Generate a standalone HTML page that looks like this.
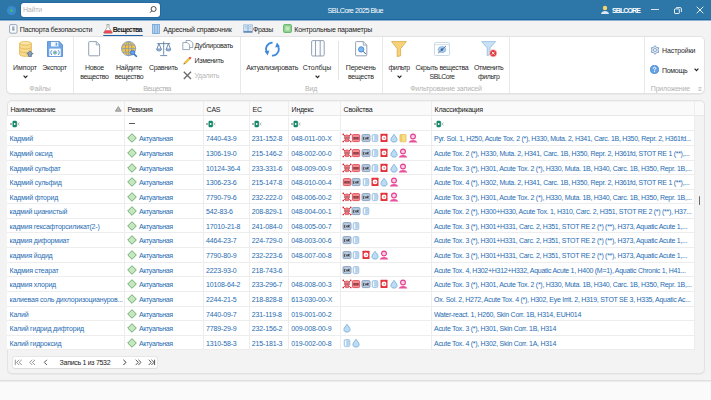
<!DOCTYPE html>
<html><head><meta charset="utf-8">
<style>
*{box-sizing:border-box;margin:0;padding:0}
html,body{width:711px;height:400px;overflow:hidden;background:#f3f3f3;font-family:"Liberation Sans",sans-serif;color:#222}
.a{position:absolute;white-space:nowrap}
svg{display:block}
.t{font-size:7px;line-height:9px}
.tab{color:#222;top:24.5px}
.rb{color:#2a2a2a}
.gl{color:#b2b2b2}
.hd{color:#222}
.c{color:#276cb2}
.ov{overflow:hidden}
</style></head><body>

<div class="a" style="left:0;top:0;width:711px;height:19px;background:#2c76a8"></div>
<div class="a" style="left:0;top:19px;width:711px;height:1px;background:#1a62a2"></div><div class="a" style="left:0;top:20px;width:711px;height:1px;background:#8fb3d3"></div>
<svg class="a" style="left:6px;top:5px" width="11" height="11" viewBox="0 0 11 11"><circle cx="5.5" cy="5.5" r="4.6" fill="#3b8ad0"/><circle cx="5.5" cy="5.5" r="1.2" fill="#38d23a"/></svg>
<div class="a" style="left:20px;top:2px;width:141px;height:16px;background:#2468a4;border-radius:4px"></div><div class="a" style="left:21px;top:3px;width:139px;height:14px;background:#fff;border-radius:3px"></div>
<div class="a t" style="left:23px;top:4.8px;color:#b4b4b4;letter-spacing:-.2px">Найти</div>
<svg class="a" style="left:149px;top:5px" width="9" height="9" viewBox="0 0 9 9"><circle cx="4.6" cy="4" r="2.5" fill="none" stroke="#3a3a3a" stroke-width=".9"/><line x1="2.8" y1="5.8" x2="1" y2="7.7" stroke="#3a3a3a" stroke-width="1"/></svg>
<div class="a t x" style="left:327.5px;top:5.5px;letter-spacing:-0.47px;color:#fff;font-size:7.2px;">SBLCore 2025 Blue</div>
<svg class="a" style="left:600px;top:5px" width="10" height="10" viewBox="0 0 10 10"><circle cx="5" cy="3" r="2.2" fill="#f6d36a"/><path d="M1 9 C1.5 6.8 3 6 5 6 C7 6 8.5 6.8 9 9Z" fill="#dbe8f4"/></svg>
<div class="a t x" style="left:612px;top:5.5px;letter-spacing:-0.9px;color:#fff;font-weight:bold;">SBLCORE</div>
<div class="a" style="left:651.3px;top:9.2px;width:7.4px;height:.9px;background:#d8e4ef"></div>
<svg class="a" style="left:673.5px;top:7px" width="8" height="7" viewBox="0 0 8 7"><rect x=".5" y="1.9" width="4.8" height="4.6" rx=".6" fill="none" stroke="#fff" stroke-width=".9"/><path d="M2.2 .6 H6.2 Q7.4 .6 7.4 1.8 V5" fill="none" stroke="#fff" stroke-width=".9"/></svg>
<svg class="a" style="left:696px;top:6px" width="8" height="8" viewBox="0 0 8 8"><path d="M.7 .7 L7.3 7.3 M7.3 .7 L.7 7.3" stroke="#fff" stroke-width=".9"/></svg>
<div class="a t tab" style="left:19.7px;top:24.5px;letter-spacing:-0.215px;">Паспорта безопасности</div>
<div class="a t tab" style="left:112.7px;top:24.5px;letter-spacing:-0.62px;font-weight:bold;">Вещества</div>
<div class="a t tab" style="left:163.3px;top:24.5px;letter-spacing:-0.178px;">Адресный справочник</div>
<div class="a t tab" style="left:253px;top:24.5px;letter-spacing:-0.225px;">Фразы</div>
<div class="a t tab" style="left:294.3px;top:24.5px;letter-spacing:-0.165px;">Контрольные параметры</div>
<svg class="a" style="left:9px;top:23.8px" width="9" height="10" viewBox="0 0 9 10"><rect x=".6" y=".6" width="7.4" height="8.6" rx="1.2" fill="#fbfcfd" stroke="#8a9db2" stroke-width=".9"/><rect x="3.1" y="2.4" width="2.4" height="3.6" fill="#9fb0c2"/><path d="M3.1 6.2 H5.5" stroke="#5f7890" stroke-width=".6"/></svg>
<svg class="a" style="left:102.5px;top:24px" width="10" height="10" viewBox="0 0 10 10"><path d="M3.6 .6 H6.4 M4 .6 V3.6 L.7 8.6 Q.5 9.2 1.2 9.2 H8.8 Q9.5 9.2 9.3 8.6 L6 3.6 V.6" fill="#fff" stroke="#8a8a8a" stroke-width=".7"/><path d="M2.3 6.2 H7.7 L9.2 8.6 Q9.4 9.2 8.8 9.2 H1.2 Q.6 9.2 .8 8.6Z" fill="#e8484e"/></svg>
<div class="a" style="left:103px;top:35px;width:40px;height:2px;background:#1e62a8;border-radius:1px"></div>
<svg class="a" style="left:152px;top:24px" width="8" height="10" viewBox="0 0 8 10"><rect x=".5" y=".5" width="7" height="9" fill="#b5d3ee" stroke="#6ea4d6" stroke-width=".8"/><path d="M2.7 .5 V9.5 M5.3 .5 V9.5" stroke="#6ea4d6" stroke-width=".8"/></svg>
<svg class="a" style="left:243px;top:24px" width="10" height="9" viewBox="0 0 10 9"><path d="M.6 .8 H4.7 V7.4 H.6Z M5.3 .8 H9.4 V7.4 H5.3Z" fill="#d3e5f5" stroke="#8fb2d6" stroke-width=".7"/><path d="M2 2.5 H3.6 M2 4 H3.6 M6.4 2.5 H8 M6.4 4 H8" stroke="#7ea6d0" stroke-width=".5"/><path d="M.4 8 H9.6" stroke="#2d5e9e" stroke-width="1.1"/></svg>
<svg class="a" style="left:283px;top:24.3px" width="9" height="9" viewBox="0 0 9 9"><rect x=".5" y=".5" width="8" height="8" rx="1.2" fill="#8fd08e" stroke="#56ae5c" stroke-width=".8"/><rect x="2.5" y="2.5" width="4" height="4" rx=".5" fill="#c4e8c2"/></svg>
<div class="a" style="left:6px;top:36px;width:699px;height:58px;background:#fff;border:1px solid #e2e2e2;border-radius:5px;box-shadow:0 1px 0 #e9e9e9"></div>
<div class="a" style="left:73px;top:37px;width:1px;height:56px;background:#e8e8e8"></div>
<div class="a" style="left:240px;top:37px;width:1px;height:56px;background:#e8e8e8"></div>
<div class="a" style="left:382px;top:37px;width:1px;height:56px;background:#e8e8e8"></div>
<div class="a" style="left:509px;top:37px;width:1px;height:56px;background:#e8e8e8"></div>
<div class="a" style="left:644px;top:37px;width:1px;height:56px;background:#e8e8e8"></div>
<div class="a" style="left:338px;top:40.5px;width:1px;height:39px;background:#e4e4e4"></div>
<div class="a t gl" style="left:-10px;width:100px;text-align:center;top:84.2px;letter-spacing:-0.15px;">Файлы</div>
<div class="a t gl" style="left:107px;width:100px;text-align:center;top:84.2px;letter-spacing:-0.62px;">Вещества</div>
<div class="a t gl" style="left:261px;width:100px;text-align:center;top:84.2px;letter-spacing:-0.15px;">Вид</div>
<div class="a t gl" style="left:396px;width:100px;text-align:center;top:84.2px;letter-spacing:-0.147px;">Фильтрование записей</div>
<div class="a t gl" style="left:620.4px;width:100px;text-align:center;top:84.2px;letter-spacing:-0.189px;">Приложение</div>
<div class="a t rb" style="left:-25px;width:100px;text-align:center;top:63px;letter-spacing:-0.1px;">Импорт</div>
<div class="a t rb" style="left:4.5px;width:100px;text-align:center;top:63px;letter-spacing:-0.267px;">Экспорт</div>
<div class="a t rb" style="left:44.400000000000006px;width:100px;text-align:center;top:63px;letter-spacing:-0.3px;">Новое</div>
<div class="a t rb" style="left:44.400000000000006px;width:100px;text-align:center;top:71.8px;letter-spacing:-0.357px;">вещество</div>
<div class="a t rb" style="left:79px;width:100px;text-align:center;top:63px;letter-spacing:-0.3px;">Найдите</div>
<div class="a t rb" style="left:79px;width:100px;text-align:center;top:71.8px;letter-spacing:-0.357px;">вещество</div>
<div class="a t rb" style="left:113.30000000000001px;width:100px;text-align:center;top:63px;letter-spacing:-0.3px;">Сравнить</div>
<div class="a t rb" style="left:222.2px;width:100px;text-align:center;top:63px;letter-spacing:-0.25px;">Актуализировать</div>
<div class="a t rb" style="left:267px;width:100px;text-align:center;top:63px;letter-spacing:-0.1px;">Столбцы</div>
<div class="a t rb" style="left:310.8px;width:100px;text-align:center;top:63px;letter-spacing:-0.2px;">Перечень</div>
<div class="a t rb" style="left:310.8px;width:100px;text-align:center;top:71.8px;letter-spacing:-0.25px;">веществ</div>
<div class="a t rb" style="left:349.1px;width:100px;text-align:center;top:63px;letter-spacing:-0.44px;">фильтр</div>
<div class="a t rb" style="left:392px;width:100px;text-align:center;top:63px;letter-spacing:-0.286px;">Скрыть вещества</div>
<div class="a t rb" style="left:392px;width:100px;text-align:center;top:71.8px;letter-spacing:-0.5px;">SBLCore</div>
<div class="a t rb" style="left:438.7px;width:100px;text-align:center;top:63px;letter-spacing:-0.314px;">Отменить</div>
<div class="a t rb" style="left:438.7px;width:100px;text-align:center;top:71.8px;letter-spacing:-0.44px;">фильтр</div>
<svg class="a" style="left:22.5px;top:75px" width="5" height="3.5" viewBox="0 0 5 3.5"><path d="M.6 .6 L2.5 2.6 L4.4 .6" fill="none" stroke="#222" stroke-width="1.15"/></svg>
<svg class="a" style="left:314.5px;top:75px" width="5" height="3.5" viewBox="0 0 5 3.5"><path d="M.6 .6 L2.5 2.6 L4.4 .6" fill="none" stroke="#222" stroke-width="1.15"/></svg>
<svg class="a" style="left:396.5px;top:75px" width="5" height="3.5" viewBox="0 0 5 3.5"><path d="M.6 .6 L2.5 2.6 L4.4 .6" fill="none" stroke="#222" stroke-width="1.15"/></svg>
<div class="a t rb" style="left:194.5px;top:41.3px;letter-spacing:-0.35px;">Дублировать</div>
<div class="a t rb" style="left:194.5px;top:56.2px;letter-spacing:-0.3px;">Изменить</div>
<div class="a t rb" style="left:194.5px;top:70.8px;letter-spacing:-0.3px;color:#b8b8b8;">Удалить</div>
<div class="a t rb" style="left:662px;top:46px;letter-spacing:-0.1px;">Настройки</div>
<div class="a t rb" style="left:662px;top:65.5px;letter-spacing:-0.3px;">Помощь</div>
<svg class="a" style="left:19px;top:41px" width="15" height="16" viewBox="0 0 15 16"><path d="M.6 2.3 V13.3 C.6 14.6 3.3 15.4 6.5 15.4 C9.7 15.4 12.4 14.6 12.4 13.3 V2.3" fill="#f7da8c" stroke="#dfb552" stroke-width=".8"/><ellipse cx="6.5" cy="2.3" rx="5.9" ry="1.8" fill="#fbe6a8" stroke="#dfb552" stroke-width=".8"/><path d="M.6 5.9 C.6 7.2 3.3 8 6.5 8 C9.7 8 12.4 7.2 12.4 5.9 M.6 9.5 C.6 10.8 3.3 11.6 6.5 11.6 C9.7 11.6 12.4 10.8 12.4 9.5" fill="none" stroke="#dfb552" stroke-width=".8"/><path d="M11 9.8 L14.2 13 H12.4 V15.6 H9.6 V13 H7.8Z" fill="#8aa2c0" stroke="#4e6688" stroke-width=".7"/></svg>
<svg class="a" style="left:47px;top:41px" width="16" height="16" viewBox="0 0 16 16"><path d="M.5 .5 H12.2 L15.5 3.8 V15.5 H.5Z" fill="#6ea6e8" stroke="#4b86cf" stroke-width=".8"/><rect x="4" y=".9" width="7.4" height="4.6" fill="#f4f7fb"/><rect x="8.6" y="1.6" width="1.6" height="3.1" fill="#6ea6e8"/><rect x="2.3" y="7.6" width="11.4" height="7.5" fill="#fff"/><path d="M5 9.2 A3.6 3.2 0 0 0 5 14 M11 9.2 A3.6 3.2 0 0 1 11 14" fill="none" stroke="#4b86cf" stroke-width="1"/><circle cx="8" cy="11.6" r="1.6" fill="none" stroke="#4b86cf" stroke-width=".8"/><circle cx="8" cy="11.6" r=".9" fill="#2fb52f"/></svg>
<svg class="a" style="left:88px;top:41px" width="13" height="16" viewBox="0 0 13 16"><path d="M.7 1.4 Q.7 .6 1.5 .6 H8.3 L11.6 3.9 V14 Q11.6 14.8 10.8 14.8 H1.5 Q.7 14.8 .7 14 Z" fill="#fff" stroke="#8797ab" stroke-width=".9"/><path d="M8.3 .6 V3.9 H11.6" fill="none" stroke="#8797ab" stroke-width=".8"/></svg>
<svg class="a" style="left:120.5px;top:40.8px" width="17" height="17" viewBox="0 0 17 17"><circle cx="7.6" cy="7.6" r="7.1" fill="#f6c13c" stroke="#6a9ad8" stroke-width=".8"/><g fill="none" stroke="#7d98c0" stroke-width=".75"><ellipse cx="7.6" cy="7.6" rx="3.2" ry="7.1"/><path d="M7.6 .5 V14.7 M.5 7.6 H14.7 M1.5 4 H13.7 M1.5 11.2 H13.7"/></g><circle cx="11.6" cy="11.6" r="2.2" fill="#5aa0f0" stroke="#2f6fc4" stroke-width=".7"/><path d="M13.1 13.1 L15.8 15.8" stroke="#2f6fc4" stroke-width="1.5"/></svg>
<svg class="a" style="left:155.5px;top:41px" width="16" height="16" viewBox="0 0 16 16"><g fill="none" stroke="#6080a8" stroke-width=".9"><path d="M7.7 .5 V13.8 M4.2 14.6 H11.2 M1.2 2.6 H14.2"/><path d="M3 2.6 L.9 8 M3 2.6 L5.1 8 M12.4 2.6 L10.3 8 M12.4 2.6 L14.5 8"/></g><path d="M.5 8 H5.5 A2.5 2 0 0 1 .5 8Z M9.9 8 H14.9 A2.5 2 0 0 1 9.9 8Z" fill="#a8c8ec" stroke="#6080a8" stroke-width=".8"/></svg>
<svg class="a" style="left:181.5px;top:40px" width="12" height="11" viewBox="0 0 12 11"><path d="M4 .5 H8.3 L10.8 3 V7.5 H4Z" fill="#fff" stroke="#7e93ab" stroke-width=".8"/><path d="M.8 2.6 H5.3 L7.6 4.9 V9.6 H.8Z" fill="#fff" stroke="#7e93ab" stroke-width=".8"/></svg>
<svg class="a" style="left:183px;top:55.8px" width="9" height="9" viewBox="0 0 9 9"><path d="M1.6 7.4 L6.6 2.4" stroke="#f0c044" stroke-width="2.3"/><path d="M6.1 1.9 L7.1 .9 L8.1 1.9 L7.1 2.9Z" fill="#e04a4a" stroke="#e04a4a" stroke-width=".8"/><path d="M.4 8.6 L1 6.8 L2.2 8Z" fill="#555"/></svg>
<svg class="a" style="left:183px;top:70.5px" width="9" height="9" viewBox="0 0 9 9"><path d="M.8 .8 L8 8 M8 .8 L.8 8" stroke="#6a6a6a" stroke-width="1.3"/></svg>
<svg class="a" style="left:264px;top:40.6px" width="17" height="17" viewBox="0 0 17 17"><g fill="none" stroke="#3f88da" stroke-width="1.8"><path d="M8.6 1.6 A6.4 6.4 0 0 0 3.2 11.6"/><path d="M7.9 14.6 A6.4 6.4 0 0 0 13.3 4.2"/></g><path d="M.6 10.2 L5.4 9.6 L3.6 14.4Z" fill="#3f88da"/><path d="M15.9 5.6 L11.1 6.4 L13 1.6Z" fill="#3f88da"/></svg>
<svg class="a" style="left:310.5px;top:40.3px" width="14" height="17" viewBox="0 0 14 17"><rect x=".6" y=".6" width="12.6" height="15.4" rx="1.2" fill="#fbfcfd" stroke="#8797ab" stroke-width=".9"/><path d="M4.5 .6 V16 M9.2 .6 V16" stroke="#8797ab" stroke-width=".9"/></svg>
<svg class="a" style="left:355px;top:40.8px" width="13" height="16" viewBox="0 0 13 16"><path d="M.6 1.4 Q.6 .6 1.4 .6 H8.3 L11.8 4.1 V14 Q11.8 14.8 11 14.8 H1.4 Q.6 14.8 .6 14 Z" fill="#fff" stroke="#8797ab" stroke-width=".9"/><path d="M8.3 .6 V4.1 H11.8" fill="none" stroke="#8797ab" stroke-width=".8"/><circle cx="6.2" cy="8.4" r="2.7" fill="#78b6f2" stroke="#3f7fca" stroke-width=".8"/><path d="M8.2 10.4 L10.8 13" stroke="#3f5f8a" stroke-width="1"/></svg>
<svg class="a" style="left:391px;top:40.6px" width="16" height="16" viewBox="0 0 16 16"><path d="M.6 .6 H15.4 L9.6 7.6 V14.8 L6.2 15.6 V7.6Z" fill="#f8d27a" stroke="#d9a744" stroke-width=".8" stroke-linejoin="round"/></svg>
<svg class="a" style="left:434px;top:41.8px" width="16" height="14" viewBox="0 0 16 14"><rect x=".5" y=".5" width="15" height="13" rx=".8" fill="#fcfdfe" stroke="#cad6e2" stroke-width=".9"/><path d="M.5 2.6 H15.5" stroke="#cad6e2" stroke-width=".8"/><ellipse cx="8" cy="7.6" rx="3.8" ry="3" fill="#a6ccf2" stroke="#6e9fd6" stroke-width=".6"/><circle cx="8" cy="7.6" r="1.3" fill="#4a6a90"/><path d="M4 11.3 L12 4" stroke="#3f5878" stroke-width=".7"/></svg>
<svg class="a" style="left:481px;top:41.2px" width="17" height="17" viewBox="0 0 17 17"><path d="M.6 .6 H14.6 L9 6.9 V13.8 L6.2 14.6 V6.9Z" fill="#c9e1f5" stroke="#93bcdd" stroke-width=".8" stroke-linejoin="round"/><circle cx="12.2" cy="12.2" r="3.7" fill="#e2393f" stroke="#fff" stroke-width=".6"/><path d="M10.8 10.8 L13.6 13.6 M13.6 10.8 L10.8 13.6" stroke="#fff" stroke-width=".9"/></svg>
<svg class="a" style="left:650px;top:45.2px" width="10" height="10" viewBox="0 0 10 10"><path d="M5.00 0.60 L3.50 2.40 L1.19 2.80 L2.00 5.00 L1.19 7.20 L3.50 7.60 L5.00 9.40 L6.50 7.60 L8.81 7.20 L8.00 5.00 L8.81 2.80 L6.50 2.40Z" fill="#dce8f5" stroke="#6a8bb2" stroke-width=".75" stroke-linejoin="round"/><circle cx="5" cy="5" r="1.5" fill="#fff" stroke="#6a8bb2" stroke-width=".7"/></svg>
<svg class="a" style="left:650px;top:65.2px" width="9" height="9" viewBox="0 0 9 9"><circle cx="4.5" cy="4.5" r="4.1" fill="#64a2e6" stroke="#3b7bc6" stroke-width=".7"/><path d="M3.2 3.7 Q3.2 2.3 4.5 2.3 Q5.8 2.3 5.8 3.4 Q5.8 4.2 4.6 4.7 V5.4" fill="none" stroke="#fff" stroke-width=".95"/><circle cx="4.6" cy="6.6" r=".55" fill="#fff"/></svg>
<svg class="a" style="left:693.8px;top:68.2px" width="5" height="3.5" viewBox="0 0 5 3.5"><path d="M.6 .6 L2.5 2.6 L4.4 .6" fill="none" stroke="#222" stroke-width="1.15"/></svg>
<svg class="a" style="left:697.5px;top:87px" width="4" height="4" viewBox="0 0 4 4"><path d="M.3 .5 H3.5 M.3 2 H3.5 M.3 3.5 H3.5" stroke="#999" stroke-width=".5"/></svg>
<div class="a" style="left:7px;top:100px;width:698px;height:274px;border:1px solid #e2e2e2;border-radius:5px;background:#f3f3f3;box-shadow:0 1px 0 #e9e9e9"></div>
<div class="a" style="left:7.5px;top:101.5px;width:696.5px;height:14.5px;background:#fafafa;border-radius:4px 4px 0 0"></div>
<div class="a" style="left:7px;top:115px;width:697px;height:1px;background:#e8e8e8"></div>
<div class="a" style="left:7px;top:116px;width:688px;height:234px;background:#fff"></div>
<div class="a" style="left:7px;top:130px;width:688px;height:1px;background:#ededed"></div>
<div class="a" style="left:7px;top:145px;width:688px;height:1px;background:#ededed"></div>
<div class="a" style="left:7px;top:160px;width:688px;height:1px;background:#ededed"></div>
<div class="a" style="left:7px;top:174px;width:688px;height:1px;background:#ededed"></div>
<div class="a" style="left:7px;top:189px;width:688px;height:1px;background:#ededed"></div>
<div class="a" style="left:7px;top:203px;width:688px;height:1px;background:#ededed"></div>
<div class="a" style="left:7px;top:218px;width:688px;height:1px;background:#ededed"></div>
<div class="a" style="left:7px;top:232px;width:688px;height:1px;background:#ededed"></div>
<div class="a" style="left:7px;top:247px;width:688px;height:1px;background:#ededed"></div>
<div class="a" style="left:7px;top:262px;width:688px;height:1px;background:#ededed"></div>
<div class="a" style="left:7px;top:276px;width:688px;height:1px;background:#ededed"></div>
<div class="a" style="left:7px;top:291px;width:688px;height:1px;background:#ededed"></div>
<div class="a" style="left:7px;top:306px;width:688px;height:1px;background:#ededed"></div>
<div class="a" style="left:7px;top:320px;width:688px;height:1px;background:#ededed"></div>
<div class="a" style="left:7px;top:335px;width:688px;height:1px;background:#ededed"></div>
<div class="a" style="left:7px;top:349px;width:688px;height:1px;background:#ededed"></div>
<div class="a" style="left:124px;top:101px;width:1px;height:249px;background:#ededed"></div>
<div class="a" style="left:203px;top:101px;width:1px;height:249px;background:#ededed"></div>
<div class="a" style="left:249px;top:101px;width:1px;height:249px;background:#ededed"></div>
<div class="a" style="left:288px;top:101px;width:1px;height:249px;background:#ededed"></div>
<div class="a" style="left:340px;top:101px;width:1px;height:249px;background:#ededed"></div>
<div class="a" style="left:431px;top:101px;width:1px;height:249px;background:#ededed"></div>
<div class="a" style="left:694px;top:101px;width:1px;height:249px;background:#ededed"></div>
<div class="a t hd" style="left:10.6px;top:105px;letter-spacing:-0.309px;">Наименование</div>
<div class="a t hd" style="left:127.6px;top:105px;letter-spacing:-0.25px;">Ревизия</div>
<div class="a t hd" style="left:206.6px;top:105px;letter-spacing:-0.25px;">CAS</div>
<div class="a t hd" style="left:252.6px;top:105px;letter-spacing:-0.25px;">EC</div>
<div class="a t hd" style="left:291.6px;top:105px;letter-spacing:-0.25px;">Индекс</div>
<div class="a t hd" style="left:343.6px;top:105px;letter-spacing:-0.25px;">Свойства</div>
<div class="a t hd" style="left:434.6px;top:105px;letter-spacing:-0.25px;">Классификация</div>
<svg class="a" style="left:114.5px;top:105.5px" width="7" height="6" viewBox="0 0 7 6"><path d="M3.3 .7 L6.2 5.2 H.4Z" fill="#b8b8b8" stroke="#7a7a7a" stroke-width=".7" stroke-linejoin="round"/></svg>
<div class="a" style="left:10px;top:119.5px"><svg width="10" height="8" viewBox="0 0 10 8"><circle cx="1" cy="4" r=".8" fill="#444"/><rect x="2.5" y=".7" width="4.4" height="6.6" rx="1.2" fill="#138a6a"/><circle cx="4.7" cy="4" r=".9" fill="#fff"/><path d="M7.5 2.5 L9.3 5.5 M9.3 2.5 L7.5 5.5" stroke="#999" stroke-width=".6"/></svg></div>
<div class="a" style="left:206px;top:119.5px"><svg width="10" height="8" viewBox="0 0 10 8"><circle cx="1" cy="4" r=".8" fill="#444"/><rect x="2.5" y=".7" width="4.4" height="6.6" rx="1.2" fill="#138a6a"/><circle cx="4.7" cy="4" r=".9" fill="#fff"/><path d="M7.5 2.5 L9.3 5.5 M9.3 2.5 L7.5 5.5" stroke="#999" stroke-width=".6"/></svg></div>
<div class="a" style="left:252px;top:119.5px"><svg width="10" height="8" viewBox="0 0 10 8"><circle cx="1" cy="4" r=".8" fill="#444"/><rect x="2.5" y=".7" width="4.4" height="6.6" rx="1.2" fill="#138a6a"/><circle cx="4.7" cy="4" r=".9" fill="#fff"/><path d="M7.5 2.5 L9.3 5.5 M9.3 2.5 L7.5 5.5" stroke="#999" stroke-width=".6"/></svg></div>
<div class="a" style="left:291px;top:119.5px"><svg width="10" height="8" viewBox="0 0 10 8"><circle cx="1" cy="4" r=".8" fill="#444"/><rect x="2.5" y=".7" width="4.4" height="6.6" rx="1.2" fill="#138a6a"/><circle cx="4.7" cy="4" r=".9" fill="#fff"/><path d="M7.5 2.5 L9.3 5.5 M9.3 2.5 L7.5 5.5" stroke="#999" stroke-width=".6"/></svg></div>
<div class="a" style="left:434px;top:119.5px"><svg width="10" height="8" viewBox="0 0 10 8"><circle cx="1" cy="4" r=".8" fill="#444"/><rect x="2.5" y=".7" width="4.4" height="6.6" rx="1.2" fill="#138a6a"/><circle cx="4.7" cy="4" r=".9" fill="#fff"/><path d="M7.5 2.5 L9.3 5.5 M9.3 2.5 L7.5 5.5" stroke="#999" stroke-width=".6"/></svg></div>
<div class="a" style="left:129.3px;top:122.7px;width:5.5px;height:1.6px;background:#5a5a5a"></div>
<div class="a t c ov" style="left:9.5px;top:134.0px;width:114px;letter-spacing:-.2px;">Кадмий</div>
<div class="a" style="left:127.1px;top:132.8px"><svg width="10" height="10" viewBox="0 0 10 10"><path d="M5 .7 L9.3 5 L5 9.3 L.7 5Z" fill="#c6e6c2" stroke="#69af69" stroke-width="1"/></svg></div>
<div class="a t c" style="left:139px;top:134.0px;letter-spacing:-.41px;">Актуальная</div>
<div class="a t c" style="left:206px;top:134.0px;letter-spacing:-.15px;">7440-43-9</div>
<div class="a t c" style="left:251.8px;top:134.0px;letter-spacing:-.15px;">231-152-8</div>
<div class="a t c" style="left:291.2px;top:134.0px;letter-spacing:-.15px;">048-011-00-X</div>
<div class="a" style="left:341.7px;top:132.9px"><svg width="10" height="10" viewBox="0 0 10 10"><path d="M1.4 1.5 L8.6 8.4 M8.6 1.5 L1.4 8.4" stroke="#cc2a36" stroke-width=".9"/><g fill="#cc2a36"><circle cx="1.3" cy="1.4" r=".85"/><circle cx="8.7" cy="1.4" r=".85"/><circle cx="1.3" cy="8.5" r=".85"/><circle cx="8.7" cy="8.5" r=".85"/></g><path d="M5 1.9 C6.6 1.9 7.6 3 7.6 4.6 C7.6 5.8 7 6.4 6.5 6.7 V8.6 H3.5 V6.7 C3 6.4 2.4 5.8 2.4 4.6 C2.4 3 3.4 1.9 5 1.9Z" fill="#ee7880" stroke="#d0303c" stroke-width=".6"/><circle cx="4" cy="5" r=".7" fill="#6a6a6a"/><circle cx="6" cy="5" r=".7" fill="#6a6a6a"/></svg></div>
<div class="a" style="left:351.1px;top:132.9px"><svg width="10" height="10" viewBox="0 0 10 10"><rect x="1.35" y="1.6" width="7.3" height="7" rx="1" fill="#f29096" stroke="#dc3a48" stroke-width=".8"/><g fill="#8a3a42"><rect x="2.3" y="4" width="1.6" height="2.6"/><rect x="4.2" y="4" width="1.6" height="2.6"/><rect x="6.1" y="4" width="1.6" height="2.6"/></g></svg></div>
<div class="a" style="left:360.5px;top:132.9px"><svg width="10" height="10" viewBox="0 0 10 10"><rect x="1" y="1.6" width="8" height="7" rx="1.2" fill="#b4cbe4" stroke="#7890b2" stroke-width=".8"/><rect x="1.8" y="3.8" width="6.4" height="3.2" fill="#dfe8f2"/><path d="M2.3 4.2 V6.6 M2.3 4.3 H3.5 M2.3 5.4 H3.3 M2.3 6.5 H3.5 M4.2 4.2 L5 6.6 L5.8 4.2 M6.4 6.6 V4.2 H7.4 V5.4 H6.4 L7.6 6.6" fill="none" stroke="#2a2f38" stroke-width=".75"/></svg></div>
<div class="a" style="left:369.9px;top:132.9px"><svg width="10" height="10" viewBox="0 0 10 10"><rect x="2.2" y="1.6" width="5.6" height="7" rx="1.3" fill="#c3dbf0" stroke="#96bde0" stroke-width=".8"/><path d="M3.5 2.6 V7.7" stroke="#fff" stroke-width=".9"/><path d="M4.8 3.3 H6.9 M4.8 4.8 H6.9 M4.8 6.3 H6.9" stroke="#9cc4e6" stroke-width=".6"/></svg></div>
<div class="a" style="left:379.3px;top:132.9px"><svg width="10" height="10" viewBox="0 0 10 10"><rect x="1.5" y=".8" width="7" height="8.2" rx=".5" fill="#e2343c"/><circle cx="5" cy="4.9" r="2.4" fill="#fff"/><path d="M4.7 3.9 L6.4 4.9 L4.7 5.9Z" fill="#d8505a"/></svg></div>
<div class="a" style="left:388.7px;top:132.9px"><svg width="10" height="10" viewBox="0 0 10 10"><path d="M5 1.3 C6 3 8.1 4.8 8.1 6.7 C8.1 8.2 6.7 9.1 5 9.1 C3.3 9.1 1.9 8.2 1.9 6.7 C1.9 4.8 4 3 5 1.3Z" fill="#bcdcf4" stroke="#6fa6d6" stroke-width=".8"/></svg></div>
<div class="a" style="left:398.1px;top:132.9px"><svg width="10" height="10" viewBox="0 0 10 10"><rect x="1.9" y="1.5" width="6.2" height="7.3" rx="1" fill="#f7de84" stroke="#e4b84c" stroke-width=".7"/><rect x="2.3" y="2" width="1.4" height="6.3" fill="#ecc462"/></svg></div>
<div class="a" style="left:407.5px;top:132.9px"><svg width="10" height="10" viewBox="0 0 10 10"><circle cx="5" cy="3.5" r="2.4" fill="#f8cfe4" stroke="#e43c90" stroke-width="1.1"/><path d="M.7 9.6 C1.2 7.6 3 6.9 5 6.9 C7 6.9 8.8 7.6 9.3 9.6Z" fill="#e9509c"/></svg></div>
<div class="a t c ov" style="left:434px;top:134.0px;width:259px;letter-spacing:-.28px;">Pyr. Sol. 1, H250, Acute Tox. 2 (*), H330, Muta. 2, H341, Carc. 1B, H350, Repr. 2, H361fd...</div>
<div class="a t c ov" style="left:9.5px;top:149.0px;width:114px;letter-spacing:-.2px;">Кадмий оксид</div>
<div class="a" style="left:127.1px;top:147.8px"><svg width="10" height="10" viewBox="0 0 10 10"><path d="M5 .7 L9.3 5 L5 9.3 L.7 5Z" fill="#c6e6c2" stroke="#69af69" stroke-width="1"/></svg></div>
<div class="a t c" style="left:139px;top:149.0px;letter-spacing:-.41px;">Актуальная</div>
<div class="a t c" style="left:206px;top:149.0px;letter-spacing:-.15px;">1306-19-0</div>
<div class="a t c" style="left:251.8px;top:149.0px;letter-spacing:-.15px;">215-146-2</div>
<div class="a t c" style="left:291.2px;top:149.0px;letter-spacing:-.15px;">048-002-00-0</div>
<div class="a" style="left:341.7px;top:147.9px"><svg width="10" height="10" viewBox="0 0 10 10"><path d="M1.4 1.5 L8.6 8.4 M8.6 1.5 L1.4 8.4" stroke="#cc2a36" stroke-width=".9"/><g fill="#cc2a36"><circle cx="1.3" cy="1.4" r=".85"/><circle cx="8.7" cy="1.4" r=".85"/><circle cx="1.3" cy="8.5" r=".85"/><circle cx="8.7" cy="8.5" r=".85"/></g><path d="M5 1.9 C6.6 1.9 7.6 3 7.6 4.6 C7.6 5.8 7 6.4 6.5 6.7 V8.6 H3.5 V6.7 C3 6.4 2.4 5.8 2.4 4.6 C2.4 3 3.4 1.9 5 1.9Z" fill="#ee7880" stroke="#d0303c" stroke-width=".6"/><circle cx="4" cy="5" r=".7" fill="#6a6a6a"/><circle cx="6" cy="5" r=".7" fill="#6a6a6a"/></svg></div>
<div class="a" style="left:351.1px;top:147.9px"><svg width="10" height="10" viewBox="0 0 10 10"><rect x="1.35" y="1.6" width="7.3" height="7" rx="1" fill="#f29096" stroke="#dc3a48" stroke-width=".8"/><g fill="#8a3a42"><rect x="2.3" y="4" width="1.6" height="2.6"/><rect x="4.2" y="4" width="1.6" height="2.6"/><rect x="6.1" y="4" width="1.6" height="2.6"/></g></svg></div>
<div class="a" style="left:360.5px;top:147.9px"><svg width="10" height="10" viewBox="0 0 10 10"><rect x="1" y="1.6" width="8" height="7" rx="1.2" fill="#b4cbe4" stroke="#7890b2" stroke-width=".8"/><rect x="1.8" y="3.8" width="6.4" height="3.2" fill="#dfe8f2"/><path d="M2.3 4.2 V6.6 M2.3 4.3 H3.5 M2.3 5.4 H3.3 M2.3 6.5 H3.5 M4.2 4.2 L5 6.6 L5.8 4.2 M6.4 6.6 V4.2 H7.4 V5.4 H6.4 L7.6 6.6" fill="none" stroke="#2a2f38" stroke-width=".75"/></svg></div>
<div class="a" style="left:369.9px;top:147.9px"><svg width="10" height="10" viewBox="0 0 10 10"><rect x="2.2" y="1.6" width="5.6" height="7" rx="1.3" fill="#c3dbf0" stroke="#96bde0" stroke-width=".8"/><path d="M3.5 2.6 V7.7" stroke="#fff" stroke-width=".9"/><path d="M4.8 3.3 H6.9 M4.8 4.8 H6.9 M4.8 6.3 H6.9" stroke="#9cc4e6" stroke-width=".6"/></svg></div>
<div class="a" style="left:379.3px;top:147.9px"><svg width="10" height="10" viewBox="0 0 10 10"><rect x="1.5" y=".8" width="7" height="8.2" rx=".5" fill="#e2343c"/><circle cx="5" cy="4.9" r="2.4" fill="#fff"/><path d="M4.7 3.9 L6.4 4.9 L4.7 5.9Z" fill="#d8505a"/></svg></div>
<div class="a" style="left:388.7px;top:147.9px"><svg width="10" height="10" viewBox="0 0 10 10"><path d="M5 1.3 C6 3 8.1 4.8 8.1 6.7 C8.1 8.2 6.7 9.1 5 9.1 C3.3 9.1 1.9 8.2 1.9 6.7 C1.9 4.8 4 3 5 1.3Z" fill="#bcdcf4" stroke="#6fa6d6" stroke-width=".8"/></svg></div>
<div class="a" style="left:398.1px;top:147.9px"><svg width="10" height="10" viewBox="0 0 10 10"><circle cx="5" cy="3.5" r="2.4" fill="#f8cfe4" stroke="#e43c90" stroke-width="1.1"/><path d="M.7 9.6 C1.2 7.6 3 6.9 5 6.9 C7 6.9 8.8 7.6 9.3 9.6Z" fill="#e9509c"/></svg></div>
<div class="a t c ov" style="left:434px;top:149.0px;width:259px;letter-spacing:-.28px;">Acute Tox. 2 (*), H330, Muta. 2, H341, Carc. 1B, H350, Repr. 2, H361fd, STOT RE 1 (**),...</div>
<div class="a t c ov" style="left:9.5px;top:164.0px;width:114px;letter-spacing:-.2px;">Кадмий сульфат</div>
<div class="a" style="left:127.1px;top:162.8px"><svg width="10" height="10" viewBox="0 0 10 10"><path d="M5 .7 L9.3 5 L5 9.3 L.7 5Z" fill="#c6e6c2" stroke="#69af69" stroke-width="1"/></svg></div>
<div class="a t c" style="left:139px;top:164.0px;letter-spacing:-.41px;">Актуальная</div>
<div class="a t c" style="left:206px;top:164.0px;letter-spacing:-.15px;">10124-36-4</div>
<div class="a t c" style="left:251.8px;top:164.0px;letter-spacing:-.15px;">233-331-6</div>
<div class="a t c" style="left:291.2px;top:164.0px;letter-spacing:-.15px;">048-009-00-9</div>
<div class="a" style="left:341.7px;top:162.9px"><svg width="10" height="10" viewBox="0 0 10 10"><path d="M1.4 1.5 L8.6 8.4 M8.6 1.5 L1.4 8.4" stroke="#cc2a36" stroke-width=".9"/><g fill="#cc2a36"><circle cx="1.3" cy="1.4" r=".85"/><circle cx="8.7" cy="1.4" r=".85"/><circle cx="1.3" cy="8.5" r=".85"/><circle cx="8.7" cy="8.5" r=".85"/></g><path d="M5 1.9 C6.6 1.9 7.6 3 7.6 4.6 C7.6 5.8 7 6.4 6.5 6.7 V8.6 H3.5 V6.7 C3 6.4 2.4 5.8 2.4 4.6 C2.4 3 3.4 1.9 5 1.9Z" fill="#ee7880" stroke="#d0303c" stroke-width=".6"/><circle cx="4" cy="5" r=".7" fill="#6a6a6a"/><circle cx="6" cy="5" r=".7" fill="#6a6a6a"/></svg></div>
<div class="a" style="left:351.1px;top:162.9px"><svg width="10" height="10" viewBox="0 0 10 10"><rect x="1.35" y="1.6" width="7.3" height="7" rx="1" fill="#f29096" stroke="#dc3a48" stroke-width=".8"/><g fill="#8a3a42"><rect x="2.3" y="4" width="1.6" height="2.6"/><rect x="4.2" y="4" width="1.6" height="2.6"/><rect x="6.1" y="4" width="1.6" height="2.6"/></g></svg></div>
<div class="a" style="left:360.5px;top:162.9px"><svg width="10" height="10" viewBox="0 0 10 10"><rect x="1" y="1.6" width="8" height="7" rx="1.2" fill="#b4cbe4" stroke="#7890b2" stroke-width=".8"/><rect x="1.8" y="3.8" width="6.4" height="3.2" fill="#dfe8f2"/><path d="M2.3 4.2 V6.6 M2.3 4.3 H3.5 M2.3 5.4 H3.3 M2.3 6.5 H3.5 M4.2 4.2 L5 6.6 L5.8 4.2 M6.4 6.6 V4.2 H7.4 V5.4 H6.4 L7.6 6.6" fill="none" stroke="#2a2f38" stroke-width=".75"/></svg></div>
<div class="a" style="left:369.9px;top:162.9px"><svg width="10" height="10" viewBox="0 0 10 10"><rect x="2.2" y="1.6" width="5.6" height="7" rx="1.3" fill="#c3dbf0" stroke="#96bde0" stroke-width=".8"/><path d="M3.5 2.6 V7.7" stroke="#fff" stroke-width=".9"/><path d="M4.8 3.3 H6.9 M4.8 4.8 H6.9 M4.8 6.3 H6.9" stroke="#9cc4e6" stroke-width=".6"/></svg></div>
<div class="a" style="left:379.3px;top:162.9px"><svg width="10" height="10" viewBox="0 0 10 10"><rect x="1.5" y=".8" width="7" height="8.2" rx=".5" fill="#e2343c"/><circle cx="5" cy="4.9" r="2.4" fill="#fff"/><path d="M4.7 3.9 L6.4 4.9 L4.7 5.9Z" fill="#d8505a"/></svg></div>
<div class="a" style="left:388.7px;top:162.9px"><svg width="10" height="10" viewBox="0 0 10 10"><path d="M5 1.3 C6 3 8.1 4.8 8.1 6.7 C8.1 8.2 6.7 9.1 5 9.1 C3.3 9.1 1.9 8.2 1.9 6.7 C1.9 4.8 4 3 5 1.3Z" fill="#bcdcf4" stroke="#6fa6d6" stroke-width=".8"/></svg></div>
<div class="a" style="left:398.1px;top:162.9px"><svg width="10" height="10" viewBox="0 0 10 10"><circle cx="5" cy="3.5" r="2.4" fill="#f8cfe4" stroke="#e43c90" stroke-width="1.1"/><path d="M.7 9.6 C1.2 7.6 3 6.9 5 6.9 C7 6.9 8.8 7.6 9.3 9.6Z" fill="#e9509c"/></svg></div>
<div class="a t c ov" style="left:434px;top:164.0px;width:259px;letter-spacing:-.28px;">Acute Tox. 3 (*), H301, Acute Tox. 2 (*), H330, Muta. 1B, H340, Carc. 1B, H350, Repr. 1B,...</div>
<div class="a t c ov" style="left:9.5px;top:178.0px;width:114px;letter-spacing:-.2px;">Кадмий сульфид</div>
<div class="a" style="left:127.1px;top:176.8px"><svg width="10" height="10" viewBox="0 0 10 10"><path d="M5 .7 L9.3 5 L5 9.3 L.7 5Z" fill="#c6e6c2" stroke="#69af69" stroke-width="1"/></svg></div>
<div class="a t c" style="left:139px;top:178.0px;letter-spacing:-.41px;">Актуальная</div>
<div class="a t c" style="left:206px;top:178.0px;letter-spacing:-.15px;">1306-23-6</div>
<div class="a t c" style="left:251.8px;top:178.0px;letter-spacing:-.15px;">215-147-8</div>
<div class="a t c" style="left:291.2px;top:178.0px;letter-spacing:-.15px;">048-010-00-4</div>
<div class="a" style="left:341.7px;top:176.9px"><svg width="10" height="10" viewBox="0 0 10 10"><rect x="1.35" y="1.6" width="7.3" height="7" rx="1" fill="#f29096" stroke="#dc3a48" stroke-width=".8"/><g fill="#8a3a42"><rect x="2.3" y="4" width="1.6" height="2.6"/><rect x="4.2" y="4" width="1.6" height="2.6"/><rect x="6.1" y="4" width="1.6" height="2.6"/></g></svg></div>
<div class="a" style="left:351.1px;top:176.9px"><svg width="10" height="10" viewBox="0 0 10 10"><rect x="1" y="1.6" width="8" height="7" rx="1.2" fill="#b4cbe4" stroke="#7890b2" stroke-width=".8"/><rect x="1.8" y="3.8" width="6.4" height="3.2" fill="#dfe8f2"/><path d="M2.3 4.2 V6.6 M2.3 4.3 H3.5 M2.3 5.4 H3.3 M2.3 6.5 H3.5 M4.2 4.2 L5 6.6 L5.8 4.2 M6.4 6.6 V4.2 H7.4 V5.4 H6.4 L7.6 6.6" fill="none" stroke="#2a2f38" stroke-width=".75"/></svg></div>
<div class="a" style="left:360.5px;top:176.9px"><svg width="10" height="10" viewBox="0 0 10 10"><rect x="2.2" y="1.6" width="5.6" height="7" rx="1.3" fill="#c3dbf0" stroke="#96bde0" stroke-width=".8"/><path d="M3.5 2.6 V7.7" stroke="#fff" stroke-width=".9"/><path d="M4.8 3.3 H6.9 M4.8 4.8 H6.9 M4.8 6.3 H6.9" stroke="#9cc4e6" stroke-width=".6"/></svg></div>
<div class="a" style="left:369.9px;top:176.9px"><svg width="10" height="10" viewBox="0 0 10 10"><rect x="1.5" y=".8" width="7" height="8.2" rx=".5" fill="#e2343c"/><circle cx="5" cy="4.9" r="2.4" fill="#fff"/><path d="M4.7 3.9 L6.4 4.9 L4.7 5.9Z" fill="#d8505a"/></svg></div>
<div class="a" style="left:379.3px;top:176.9px"><svg width="10" height="10" viewBox="0 0 10 10"><path d="M5 1.3 C6 3 8.1 4.8 8.1 6.7 C8.1 8.2 6.7 9.1 5 9.1 C3.3 9.1 1.9 8.2 1.9 6.7 C1.9 4.8 4 3 5 1.3Z" fill="#bcdcf4" stroke="#6fa6d6" stroke-width=".8"/></svg></div>
<div class="a" style="left:388.7px;top:176.9px"><svg width="10" height="10" viewBox="0 0 10 10"><circle cx="5" cy="3.5" r="2.4" fill="#f8cfe4" stroke="#e43c90" stroke-width="1.1"/><path d="M.7 9.6 C1.2 7.6 3 6.9 5 6.9 C7 6.9 8.8 7.6 9.3 9.6Z" fill="#e9509c"/></svg></div>
<div class="a t c ov" style="left:434px;top:178.0px;width:259px;letter-spacing:-.28px;">Acute Tox. 4 (*), H302, Muta. 2, H341, Carc. 1B, H350, Repr. 2, H361fd, STOT RE 1 (**),...</div>
<div class="a t c ov" style="left:9.5px;top:193.0px;width:114px;letter-spacing:-.2px;">Кадмий фторид</div>
<div class="a" style="left:127.1px;top:191.8px"><svg width="10" height="10" viewBox="0 0 10 10"><path d="M5 .7 L9.3 5 L5 9.3 L.7 5Z" fill="#c6e6c2" stroke="#69af69" stroke-width="1"/></svg></div>
<div class="a t c" style="left:139px;top:193.0px;letter-spacing:-.41px;">Актуальная</div>
<div class="a t c" style="left:206px;top:193.0px;letter-spacing:-.15px;">7790-79-6</div>
<div class="a t c" style="left:251.8px;top:193.0px;letter-spacing:-.15px;">232-222-0</div>
<div class="a t c" style="left:291.2px;top:193.0px;letter-spacing:-.15px;">048-006-00-2</div>
<div class="a" style="left:341.7px;top:191.9px"><svg width="10" height="10" viewBox="0 0 10 10"><path d="M1.4 1.5 L8.6 8.4 M8.6 1.5 L1.4 8.4" stroke="#cc2a36" stroke-width=".9"/><g fill="#cc2a36"><circle cx="1.3" cy="1.4" r=".85"/><circle cx="8.7" cy="1.4" r=".85"/><circle cx="1.3" cy="8.5" r=".85"/><circle cx="8.7" cy="8.5" r=".85"/></g><path d="M5 1.9 C6.6 1.9 7.6 3 7.6 4.6 C7.6 5.8 7 6.4 6.5 6.7 V8.6 H3.5 V6.7 C3 6.4 2.4 5.8 2.4 4.6 C2.4 3 3.4 1.9 5 1.9Z" fill="#ee7880" stroke="#d0303c" stroke-width=".6"/><circle cx="4" cy="5" r=".7" fill="#6a6a6a"/><circle cx="6" cy="5" r=".7" fill="#6a6a6a"/></svg></div>
<div class="a" style="left:351.1px;top:191.9px"><svg width="10" height="10" viewBox="0 0 10 10"><rect x="1.35" y="1.6" width="7.3" height="7" rx="1" fill="#f29096" stroke="#dc3a48" stroke-width=".8"/><g fill="#8a3a42"><rect x="2.3" y="4" width="1.6" height="2.6"/><rect x="4.2" y="4" width="1.6" height="2.6"/><rect x="6.1" y="4" width="1.6" height="2.6"/></g></svg></div>
<div class="a" style="left:360.5px;top:191.9px"><svg width="10" height="10" viewBox="0 0 10 10"><rect x="1" y="1.6" width="8" height="7" rx="1.2" fill="#b4cbe4" stroke="#7890b2" stroke-width=".8"/><rect x="1.8" y="3.8" width="6.4" height="3.2" fill="#dfe8f2"/><path d="M2.3 4.2 V6.6 M2.3 4.3 H3.5 M2.3 5.4 H3.3 M2.3 6.5 H3.5 M4.2 4.2 L5 6.6 L5.8 4.2 M6.4 6.6 V4.2 H7.4 V5.4 H6.4 L7.6 6.6" fill="none" stroke="#2a2f38" stroke-width=".75"/></svg></div>
<div class="a" style="left:369.9px;top:191.9px"><svg width="10" height="10" viewBox="0 0 10 10"><rect x="2.2" y="1.6" width="5.6" height="7" rx="1.3" fill="#c3dbf0" stroke="#96bde0" stroke-width=".8"/><path d="M3.5 2.6 V7.7" stroke="#fff" stroke-width=".9"/><path d="M4.8 3.3 H6.9 M4.8 4.8 H6.9 M4.8 6.3 H6.9" stroke="#9cc4e6" stroke-width=".6"/></svg></div>
<div class="a" style="left:379.3px;top:191.9px"><svg width="10" height="10" viewBox="0 0 10 10"><rect x="1.5" y=".8" width="7" height="8.2" rx=".5" fill="#e2343c"/><circle cx="5" cy="4.9" r="2.4" fill="#fff"/><path d="M4.7 3.9 L6.4 4.9 L4.7 5.9Z" fill="#d8505a"/></svg></div>
<div class="a" style="left:388.7px;top:191.9px"><svg width="10" height="10" viewBox="0 0 10 10"><circle cx="5" cy="3.5" r="2.4" fill="#f8cfe4" stroke="#e43c90" stroke-width="1.1"/><path d="M.7 9.6 C1.2 7.6 3 6.9 5 6.9 C7 6.9 8.8 7.6 9.3 9.6Z" fill="#e9509c"/></svg></div>
<div class="a t c ov" style="left:434px;top:193.0px;width:259px;letter-spacing:-.28px;">Acute Tox. 3 (*), H301, Acute Tox. 2 (*), H330, Muta. 1B, H340, Carc. 1B, H350, Repr. 1B,...</div>
<div class="a t c ov" style="left:9.5px;top:207.0px;width:114px;letter-spacing:-.2px;">кадмий цианистый</div>
<div class="a" style="left:127.1px;top:205.8px"><svg width="10" height="10" viewBox="0 0 10 10"><path d="M5 .7 L9.3 5 L5 9.3 L.7 5Z" fill="#c6e6c2" stroke="#69af69" stroke-width="1"/></svg></div>
<div class="a t c" style="left:139px;top:207.0px;letter-spacing:-.41px;">Актуальная</div>
<div class="a t c" style="left:206px;top:207.0px;letter-spacing:-.15px;">542-83-6</div>
<div class="a t c" style="left:251.8px;top:207.0px;letter-spacing:-.15px;">208-829-1</div>
<div class="a t c" style="left:291.2px;top:207.0px;letter-spacing:-.15px;">048-004-00-1</div>
<div class="a" style="left:341.7px;top:205.9px"><svg width="10" height="10" viewBox="0 0 10 10"><path d="M1.4 1.5 L8.6 8.4 M8.6 1.5 L1.4 8.4" stroke="#cc2a36" stroke-width=".9"/><g fill="#cc2a36"><circle cx="1.3" cy="1.4" r=".85"/><circle cx="8.7" cy="1.4" r=".85"/><circle cx="1.3" cy="8.5" r=".85"/><circle cx="8.7" cy="8.5" r=".85"/></g><path d="M5 1.9 C6.6 1.9 7.6 3 7.6 4.6 C7.6 5.8 7 6.4 6.5 6.7 V8.6 H3.5 V6.7 C3 6.4 2.4 5.8 2.4 4.6 C2.4 3 3.4 1.9 5 1.9Z" fill="#ee7880" stroke="#d0303c" stroke-width=".6"/><circle cx="4" cy="5" r=".7" fill="#6a6a6a"/><circle cx="6" cy="5" r=".7" fill="#6a6a6a"/></svg></div>
<div class="a" style="left:351.1px;top:205.9px"><svg width="10" height="10" viewBox="0 0 10 10"><rect x="1" y="1.6" width="8" height="7" rx="1.2" fill="#b4cbe4" stroke="#7890b2" stroke-width=".8"/><rect x="1.8" y="3.8" width="6.4" height="3.2" fill="#dfe8f2"/><path d="M2.3 4.2 V6.6 M2.3 4.3 H3.5 M2.3 5.4 H3.3 M2.3 6.5 H3.5 M4.2 4.2 L5 6.6 L5.8 4.2 M6.4 6.6 V4.2 H7.4 V5.4 H6.4 L7.6 6.6" fill="none" stroke="#2a2f38" stroke-width=".75"/></svg></div>
<div class="a" style="left:360.5px;top:205.9px"><svg width="10" height="10" viewBox="0 0 10 10"><rect x="2.2" y="1.6" width="5.6" height="7" rx="1.3" fill="#c3dbf0" stroke="#96bde0" stroke-width=".8"/><path d="M3.5 2.6 V7.7" stroke="#fff" stroke-width=".9"/><path d="M4.8 3.3 H6.9 M4.8 4.8 H6.9 M4.8 6.3 H6.9" stroke="#9cc4e6" stroke-width=".6"/></svg></div>
<div class="a t c ov" style="left:434px;top:207.0px;width:259px;letter-spacing:-.28px;">Acute Tox. 2 (*), H300+H330, Acute Tox. 1, H310, Carc. 2, H351, STOT RE 2 (*) (**), H37...</div>
<div class="a t c ov" style="left:9.5px;top:222.0px;width:114px;letter-spacing:-.2px;">кадмия гексафторсиликат(2-)</div>
<div class="a" style="left:127.1px;top:220.8px"><svg width="10" height="10" viewBox="0 0 10 10"><path d="M5 .7 L9.3 5 L5 9.3 L.7 5Z" fill="#c6e6c2" stroke="#69af69" stroke-width="1"/></svg></div>
<div class="a t c" style="left:139px;top:222.0px;letter-spacing:-.41px;">Актуальная</div>
<div class="a t c" style="left:206px;top:222.0px;letter-spacing:-.15px;">17010-21-8</div>
<div class="a t c" style="left:251.8px;top:222.0px;letter-spacing:-.15px;">241-084-0</div>
<div class="a t c" style="left:291.2px;top:222.0px;letter-spacing:-.15px;">048-005-00-7</div>
<div class="a" style="left:341.7px;top:220.9px"><svg width="10" height="10" viewBox="0 0 10 10"><rect x="1" y="1.6" width="8" height="7" rx="1.2" fill="#b4cbe4" stroke="#7890b2" stroke-width=".8"/><rect x="1.8" y="3.8" width="6.4" height="3.2" fill="#dfe8f2"/><path d="M2.3 4.2 V6.6 M2.3 4.3 H3.5 M2.3 5.4 H3.3 M2.3 6.5 H3.5 M4.2 4.2 L5 6.6 L5.8 4.2 M6.4 6.6 V4.2 H7.4 V5.4 H6.4 L7.6 6.6" fill="none" stroke="#2a2f38" stroke-width=".75"/></svg></div>
<div class="a" style="left:351.1px;top:220.9px"><svg width="10" height="10" viewBox="0 0 10 10"><rect x="2.2" y="1.6" width="5.6" height="7" rx="1.3" fill="#c3dbf0" stroke="#96bde0" stroke-width=".8"/><path d="M3.5 2.6 V7.7" stroke="#fff" stroke-width=".9"/><path d="M4.8 3.3 H6.9 M4.8 4.8 H6.9 M4.8 6.3 H6.9" stroke="#9cc4e6" stroke-width=".6"/></svg></div>
<div class="a t c ov" style="left:434px;top:222.0px;width:259px;letter-spacing:-.28px;">Acute Tox. 3 (*), H301+H331, Carc. 2, H351, STOT RE 2 (*) (**), H373, Aquatic Acute 1,...</div>
<div class="a t c ov" style="left:9.5px;top:236.0px;width:114px;letter-spacing:-.2px;">кадмия диформиат</div>
<div class="a" style="left:127.1px;top:234.8px"><svg width="10" height="10" viewBox="0 0 10 10"><path d="M5 .7 L9.3 5 L5 9.3 L.7 5Z" fill="#c6e6c2" stroke="#69af69" stroke-width="1"/></svg></div>
<div class="a t c" style="left:139px;top:236.0px;letter-spacing:-.41px;">Актуальная</div>
<div class="a t c" style="left:206px;top:236.0px;letter-spacing:-.15px;">4464-23-7</div>
<div class="a t c" style="left:251.8px;top:236.0px;letter-spacing:-.15px;">224-729-0</div>
<div class="a t c" style="left:291.2px;top:236.0px;letter-spacing:-.15px;">048-003-00-6</div>
<div class="a" style="left:341.7px;top:234.9px"><svg width="10" height="10" viewBox="0 0 10 10"><rect x="1" y="1.6" width="8" height="7" rx="1.2" fill="#b4cbe4" stroke="#7890b2" stroke-width=".8"/><rect x="1.8" y="3.8" width="6.4" height="3.2" fill="#dfe8f2"/><path d="M2.3 4.2 V6.6 M2.3 4.3 H3.5 M2.3 5.4 H3.3 M2.3 6.5 H3.5 M4.2 4.2 L5 6.6 L5.8 4.2 M6.4 6.6 V4.2 H7.4 V5.4 H6.4 L7.6 6.6" fill="none" stroke="#2a2f38" stroke-width=".75"/></svg></div>
<div class="a" style="left:351.1px;top:234.9px"><svg width="10" height="10" viewBox="0 0 10 10"><rect x="2.2" y="1.6" width="5.6" height="7" rx="1.3" fill="#c3dbf0" stroke="#96bde0" stroke-width=".8"/><path d="M3.5 2.6 V7.7" stroke="#fff" stroke-width=".9"/><path d="M4.8 3.3 H6.9 M4.8 4.8 H6.9 M4.8 6.3 H6.9" stroke="#9cc4e6" stroke-width=".6"/></svg></div>
<div class="a t c ov" style="left:434px;top:236.0px;width:259px;letter-spacing:-.28px;">Acute Tox. 3 (*), H301+H331, Carc. 2, H351, STOT RE 2 (*) (**), H373, Aquatic Acute 1,...</div>
<div class="a t c ov" style="left:9.5px;top:251.0px;width:114px;letter-spacing:-.2px;">кадмия йодид</div>
<div class="a" style="left:127.1px;top:249.8px"><svg width="10" height="10" viewBox="0 0 10 10"><path d="M5 .7 L9.3 5 L5 9.3 L.7 5Z" fill="#c6e6c2" stroke="#69af69" stroke-width="1"/></svg></div>
<div class="a t c" style="left:139px;top:251.0px;letter-spacing:-.41px;">Актуальная</div>
<div class="a t c" style="left:206px;top:251.0px;letter-spacing:-.15px;">7790-80-9</div>
<div class="a t c" style="left:251.8px;top:251.0px;letter-spacing:-.15px;">232-223-6</div>
<div class="a t c" style="left:291.2px;top:251.0px;letter-spacing:-.15px;">048-007-00-8</div>
<div class="a" style="left:341.7px;top:249.9px"><svg width="10" height="10" viewBox="0 0 10 10"><rect x="1" y="1.6" width="8" height="7" rx="1.2" fill="#b4cbe4" stroke="#7890b2" stroke-width=".8"/><rect x="1.8" y="3.8" width="6.4" height="3.2" fill="#dfe8f2"/><path d="M2.3 4.2 V6.6 M2.3 4.3 H3.5 M2.3 5.4 H3.3 M2.3 6.5 H3.5 M4.2 4.2 L5 6.6 L5.8 4.2 M6.4 6.6 V4.2 H7.4 V5.4 H6.4 L7.6 6.6" fill="none" stroke="#2a2f38" stroke-width=".75"/></svg></div>
<div class="a" style="left:351.1px;top:249.9px"><svg width="10" height="10" viewBox="0 0 10 10"><rect x="2.2" y="1.6" width="5.6" height="7" rx="1.3" fill="#c3dbf0" stroke="#96bde0" stroke-width=".8"/><path d="M3.5 2.6 V7.7" stroke="#fff" stroke-width=".9"/><path d="M4.8 3.3 H6.9 M4.8 4.8 H6.9 M4.8 6.3 H6.9" stroke="#9cc4e6" stroke-width=".6"/></svg></div>
<div class="a" style="left:360.5px;top:249.9px"><svg width="10" height="10" viewBox="0 0 10 10"><rect x="1.5" y=".8" width="7" height="8.2" rx=".5" fill="#e2343c"/><circle cx="5" cy="4.9" r="2.4" fill="#fff"/><path d="M4.7 3.9 L6.4 4.9 L4.7 5.9Z" fill="#d8505a"/></svg></div>
<div class="a" style="left:369.9px;top:249.9px"><svg width="10" height="10" viewBox="0 0 10 10"><path d="M5 1.3 C6 3 8.1 4.8 8.1 6.7 C8.1 8.2 6.7 9.1 5 9.1 C3.3 9.1 1.9 8.2 1.9 6.7 C1.9 4.8 4 3 5 1.3Z" fill="#bcdcf4" stroke="#6fa6d6" stroke-width=".8"/></svg></div>
<div class="a" style="left:379.3px;top:249.9px"><svg width="10" height="10" viewBox="0 0 10 10"><circle cx="5" cy="3.5" r="2.4" fill="#f8cfe4" stroke="#e43c90" stroke-width="1.1"/><path d="M.7 9.6 C1.2 7.6 3 6.9 5 6.9 C7 6.9 8.8 7.6 9.3 9.6Z" fill="#e9509c"/></svg></div>
<div class="a t c ov" style="left:434px;top:251.0px;width:259px;letter-spacing:-.28px;">Acute Tox. 3 (*), H301+H331, Carc. 2, H351, STOT RE 2 (*) (**), H373, Aquatic Acute 1,...</div>
<div class="a t c ov" style="left:9.5px;top:266.0px;width:114px;letter-spacing:-.2px;">Кадмия стеарат</div>
<div class="a" style="left:127.1px;top:264.8px"><svg width="10" height="10" viewBox="0 0 10 10"><path d="M5 .7 L9.3 5 L5 9.3 L.7 5Z" fill="#c6e6c2" stroke="#69af69" stroke-width="1"/></svg></div>
<div class="a t c" style="left:139px;top:266.0px;letter-spacing:-.41px;">Актуальная</div>
<div class="a t c" style="left:206px;top:266.0px;letter-spacing:-.15px;">2223-93-0</div>
<div class="a t c" style="left:251.8px;top:266.0px;letter-spacing:-.15px;">218-743-6</div>
<div class="a t c" style="left:291.2px;top:266.0px;letter-spacing:-.15px;"></div>
<div class="a" style="left:341.7px;top:264.9px"><svg width="10" height="10" viewBox="0 0 10 10"><rect x="1" y="1.6" width="8" height="7" rx="1.2" fill="#b4cbe4" stroke="#7890b2" stroke-width=".8"/><rect x="1.8" y="3.8" width="6.4" height="3.2" fill="#dfe8f2"/><path d="M2.3 4.2 V6.6 M2.3 4.3 H3.5 M2.3 5.4 H3.3 M2.3 6.5 H3.5 M4.2 4.2 L5 6.6 L5.8 4.2 M6.4 6.6 V4.2 H7.4 V5.4 H6.4 L7.6 6.6" fill="none" stroke="#2a2f38" stroke-width=".75"/></svg></div>
<div class="a" style="left:351.1px;top:264.9px"><svg width="10" height="10" viewBox="0 0 10 10"><rect x="2.2" y="1.6" width="5.6" height="7" rx="1.3" fill="#c3dbf0" stroke="#96bde0" stroke-width=".8"/><path d="M3.5 2.6 V7.7" stroke="#fff" stroke-width=".9"/><path d="M4.8 3.3 H6.9 M4.8 4.8 H6.9 M4.8 6.3 H6.9" stroke="#9cc4e6" stroke-width=".6"/></svg></div>
<div class="a t c ov" style="left:434px;top:266.0px;width:259px;letter-spacing:-.28px;">Acute Tox. 4, H302+H312+H332, Aquatic Acute 1, H400 (M=1), Aquatic Chronic 1, H41...</div>
<div class="a t c ov" style="left:9.5px;top:280.0px;width:114px;letter-spacing:-.2px;">кадмия хлорид</div>
<div class="a" style="left:127.1px;top:278.8px"><svg width="10" height="10" viewBox="0 0 10 10"><path d="M5 .7 L9.3 5 L5 9.3 L.7 5Z" fill="#c6e6c2" stroke="#69af69" stroke-width="1"/></svg></div>
<div class="a t c" style="left:139px;top:280.0px;letter-spacing:-.41px;">Актуальная</div>
<div class="a t c" style="left:206px;top:280.0px;letter-spacing:-.15px;">10108-64-2</div>
<div class="a t c" style="left:251.8px;top:280.0px;letter-spacing:-.15px;">233-296-7</div>
<div class="a t c" style="left:291.2px;top:280.0px;letter-spacing:-.15px;">048-008-00-3</div>
<div class="a" style="left:341.7px;top:278.9px"><svg width="10" height="10" viewBox="0 0 10 10"><path d="M1.4 1.5 L8.6 8.4 M8.6 1.5 L1.4 8.4" stroke="#cc2a36" stroke-width=".9"/><g fill="#cc2a36"><circle cx="1.3" cy="1.4" r=".85"/><circle cx="8.7" cy="1.4" r=".85"/><circle cx="1.3" cy="8.5" r=".85"/><circle cx="8.7" cy="8.5" r=".85"/></g><path d="M5 1.9 C6.6 1.9 7.6 3 7.6 4.6 C7.6 5.8 7 6.4 6.5 6.7 V8.6 H3.5 V6.7 C3 6.4 2.4 5.8 2.4 4.6 C2.4 3 3.4 1.9 5 1.9Z" fill="#ee7880" stroke="#d0303c" stroke-width=".6"/><circle cx="4" cy="5" r=".7" fill="#6a6a6a"/><circle cx="6" cy="5" r=".7" fill="#6a6a6a"/></svg></div>
<div class="a" style="left:351.1px;top:278.9px"><svg width="10" height="10" viewBox="0 0 10 10"><rect x="1.35" y="1.6" width="7.3" height="7" rx="1" fill="#f29096" stroke="#dc3a48" stroke-width=".8"/><g fill="#8a3a42"><rect x="2.3" y="4" width="1.6" height="2.6"/><rect x="4.2" y="4" width="1.6" height="2.6"/><rect x="6.1" y="4" width="1.6" height="2.6"/></g></svg></div>
<div class="a" style="left:360.5px;top:278.9px"><svg width="10" height="10" viewBox="0 0 10 10"><rect x="1" y="1.6" width="8" height="7" rx="1.2" fill="#b4cbe4" stroke="#7890b2" stroke-width=".8"/><rect x="1.8" y="3.8" width="6.4" height="3.2" fill="#dfe8f2"/><path d="M2.3 4.2 V6.6 M2.3 4.3 H3.5 M2.3 5.4 H3.3 M2.3 6.5 H3.5 M4.2 4.2 L5 6.6 L5.8 4.2 M6.4 6.6 V4.2 H7.4 V5.4 H6.4 L7.6 6.6" fill="none" stroke="#2a2f38" stroke-width=".75"/></svg></div>
<div class="a" style="left:369.9px;top:278.9px"><svg width="10" height="10" viewBox="0 0 10 10"><rect x="2.2" y="1.6" width="5.6" height="7" rx="1.3" fill="#c3dbf0" stroke="#96bde0" stroke-width=".8"/><path d="M3.5 2.6 V7.7" stroke="#fff" stroke-width=".9"/><path d="M4.8 3.3 H6.9 M4.8 4.8 H6.9 M4.8 6.3 H6.9" stroke="#9cc4e6" stroke-width=".6"/></svg></div>
<div class="a" style="left:379.3px;top:278.9px"><svg width="10" height="10" viewBox="0 0 10 10"><rect x="1.5" y=".8" width="7" height="8.2" rx=".5" fill="#e2343c"/><circle cx="5" cy="4.9" r="2.4" fill="#fff"/><path d="M4.7 3.9 L6.4 4.9 L4.7 5.9Z" fill="#d8505a"/></svg></div>
<div class="a" style="left:388.7px;top:278.9px"><svg width="10" height="10" viewBox="0 0 10 10"><path d="M5 1.3 C6 3 8.1 4.8 8.1 6.7 C8.1 8.2 6.7 9.1 5 9.1 C3.3 9.1 1.9 8.2 1.9 6.7 C1.9 4.8 4 3 5 1.3Z" fill="#bcdcf4" stroke="#6fa6d6" stroke-width=".8"/></svg></div>
<div class="a" style="left:398.1px;top:278.9px"><svg width="10" height="10" viewBox="0 0 10 10"><circle cx="5" cy="3.5" r="2.4" fill="#f8cfe4" stroke="#e43c90" stroke-width="1.1"/><path d="M.7 9.6 C1.2 7.6 3 6.9 5 6.9 C7 6.9 8.8 7.6 9.3 9.6Z" fill="#e9509c"/></svg></div>
<div class="a t c ov" style="left:434px;top:280.0px;width:259px;letter-spacing:-.28px;">Acute Tox. 3 (*), H301, Acute Tox. 2 (*), H330, Muta. 1B, H340, Carc. 1B, H350, Repr. 1B,...</div>
<div class="a t c ov" style="left:9.5px;top:295.0px;width:114px;letter-spacing:-.2px;">калиевая соль дихлоризоциануров...</div>
<div class="a" style="left:127.1px;top:293.8px"><svg width="10" height="10" viewBox="0 0 10 10"><path d="M5 .7 L9.3 5 L5 9.3 L.7 5Z" fill="#c6e6c2" stroke="#69af69" stroke-width="1"/></svg></div>
<div class="a t c" style="left:139px;top:295.0px;letter-spacing:-.41px;">Актуальная</div>
<div class="a t c" style="left:206px;top:295.0px;letter-spacing:-.15px;">2244-21-5</div>
<div class="a t c" style="left:251.8px;top:295.0px;letter-spacing:-.15px;">218-828-8</div>
<div class="a t c" style="left:291.2px;top:295.0px;letter-spacing:-.15px;">613-030-00-X</div>
<div class="a t c ov" style="left:434px;top:295.0px;width:259px;letter-spacing:-.28px;">Ox. Sol. 2, H272, Acute Tox. 4 (*), H302, Eye Irrit. 2, H319, STOT SE 3, H335, Aquatic Ac...</div>
<div class="a t c ov" style="left:9.5px;top:310.0px;width:114px;letter-spacing:-.2px;">Калий</div>
<div class="a" style="left:127.1px;top:308.8px"><svg width="10" height="10" viewBox="0 0 10 10"><path d="M5 .7 L9.3 5 L5 9.3 L.7 5Z" fill="#c6e6c2" stroke="#69af69" stroke-width="1"/></svg></div>
<div class="a t c" style="left:139px;top:310.0px;letter-spacing:-.41px;">Актуальная</div>
<div class="a t c" style="left:206px;top:310.0px;letter-spacing:-.15px;">7440-09-7</div>
<div class="a t c" style="left:251.8px;top:310.0px;letter-spacing:-.15px;">231-119-8</div>
<div class="a t c" style="left:291.2px;top:310.0px;letter-spacing:-.15px;">019-001-00-2</div>
<div class="a t c ov" style="left:434px;top:310.0px;width:259px;letter-spacing:-.28px;">Water-react. 1, H260, Skin Corr. 1B, H314, EUH014</div>
<div class="a t c ov" style="left:9.5px;top:324.0px;width:114px;letter-spacing:-.2px;">Калий гидрид дифторид</div>
<div class="a" style="left:127.1px;top:322.8px"><svg width="10" height="10" viewBox="0 0 10 10"><path d="M5 .7 L9.3 5 L5 9.3 L.7 5Z" fill="#c6e6c2" stroke="#69af69" stroke-width="1"/></svg></div>
<div class="a t c" style="left:139px;top:324.0px;letter-spacing:-.41px;">Актуальная</div>
<div class="a t c" style="left:206px;top:324.0px;letter-spacing:-.15px;">7789-29-9</div>
<div class="a t c" style="left:251.8px;top:324.0px;letter-spacing:-.15px;">232-156-2</div>
<div class="a t c" style="left:291.2px;top:324.0px;letter-spacing:-.15px;">009-008-00-9</div>
<div class="a" style="left:341.7px;top:322.9px"><svg width="10" height="10" viewBox="0 0 10 10"><path d="M5 1.3 C6 3 8.1 4.8 8.1 6.7 C8.1 8.2 6.7 9.1 5 9.1 C3.3 9.1 1.9 8.2 1.9 6.7 C1.9 4.8 4 3 5 1.3Z" fill="#bcdcf4" stroke="#6fa6d6" stroke-width=".8"/></svg></div>
<div class="a t c ov" style="left:434px;top:324.0px;width:259px;letter-spacing:-.28px;">Acute Tox. 3 (*), H301, Skin Corr. 1B, H314</div>
<div class="a t c ov" style="left:9.5px;top:339.0px;width:114px;letter-spacing:-.2px;">Калий гидроксид</div>
<div class="a" style="left:127.1px;top:337.8px"><svg width="10" height="10" viewBox="0 0 10 10"><path d="M5 .7 L9.3 5 L5 9.3 L.7 5Z" fill="#c6e6c2" stroke="#69af69" stroke-width="1"/></svg></div>
<div class="a t c" style="left:139px;top:339.0px;letter-spacing:-.41px;">Актуальная</div>
<div class="a t c" style="left:206px;top:339.0px;letter-spacing:-.15px;">1310-58-3</div>
<div class="a t c" style="left:251.8px;top:339.0px;letter-spacing:-.15px;">215-181-3</div>
<div class="a t c" style="left:291.2px;top:339.0px;letter-spacing:-.15px;">019-002-00-8</div>
<div class="a" style="left:341.7px;top:337.9px"><svg width="10" height="10" viewBox="0 0 10 10"><rect x="2.2" y="1.6" width="5.6" height="7" rx="1.3" fill="#c3dbf0" stroke="#96bde0" stroke-width=".8"/><path d="M3.5 2.6 V7.7" stroke="#fff" stroke-width=".9"/><path d="M4.8 3.3 H6.9 M4.8 4.8 H6.9 M4.8 6.3 H6.9" stroke="#9cc4e6" stroke-width=".6"/></svg></div>
<div class="a" style="left:351.1px;top:337.9px"><svg width="10" height="10" viewBox="0 0 10 10"><path d="M5 1.3 C6 3 8.1 4.8 8.1 6.7 C8.1 8.2 6.7 9.1 5 9.1 C3.3 9.1 1.9 8.2 1.9 6.7 C1.9 4.8 4 3 5 1.3Z" fill="#bcdcf4" stroke="#6fa6d6" stroke-width=".8"/></svg></div>
<div class="a t c ov" style="left:434px;top:339.0px;width:259px;letter-spacing:-.28px;">Acute Tox. 4 (*), H302, Skin Corr. 1A, H314</div>
<div class="a" style="left:698.6px;top:195.5px;width:1.6px;height:9px;background:#6a6a6a;border-radius:1px"></div>
<div class="a" style="left:11.5px;top:355.5px;width:146.5px;height:13.5px;background:#fff;border:1px solid #e6e6e6;border-bottom-color:#dcdcdc;border-radius:3px"></div>
<div class="a t rb" style="left:59.6px;top:358.2px;letter-spacing:-0.293px;color:#222;">Запись 1 из 7532</div>
<svg class="a" style="left:0;top:0" width="711" height="400"><path d="M15.3 359.7 V365.1" stroke="#8a8a8a" stroke-width=".9"/><path d="M19.2 359.8 L16.599999999999998 362.4 L19.2 365" fill="none" stroke="#8a8a8a" stroke-width="0.9"/><path d="M21.8 359.8 L19.2 362.4 L21.8 365" fill="none" stroke="#8a8a8a" stroke-width="0.9"/><path d="M32.3 359.8 L29.7 362.4 L32.3 365" fill="none" stroke="#8a8a8a" stroke-width="0.9"/><path d="M35 359.8 L32.4 362.4 L35 365" fill="none" stroke="#8a8a8a" stroke-width="0.9"/><path d="M46.9 359.8 L44.3 362.4 L46.9 365" fill="none" stroke="#555" stroke-width="1"/><path d="M123.4 359.8 L126 362.4 L123.4 365" fill="none" stroke="#333" stroke-width="1"/><path d="M135.70000000000002 359.8 L138.3 362.4 L135.70000000000002 365" fill="none" stroke="#444" stroke-width="0.9"/><path d="M138.4 359.8 L141 362.4 L138.4 365" fill="none" stroke="#444" stroke-width="0.9"/><path d="M148.70000000000002 359.8 L151.3 362.4 L148.70000000000002 365" fill="none" stroke="#444" stroke-width="0.9"/><path d="M151.4 359.8 L154 362.4 L151.4 365" fill="none" stroke="#444" stroke-width="0.9"/><path d="M154.6 359.7 V365.1" stroke="#444" stroke-width=".9"/></svg>
<div class="a" style="left:0;top:380px;width:711px;height:1px;background:#e0e0e0"></div><div class="a" style="left:0;top:381px;width:711px;height:1px;background:#ebebeb"></div>
<div class="a" style="left:0;top:382px;width:711px;height:18px;background:#fafafa"></div>
</body></html>
